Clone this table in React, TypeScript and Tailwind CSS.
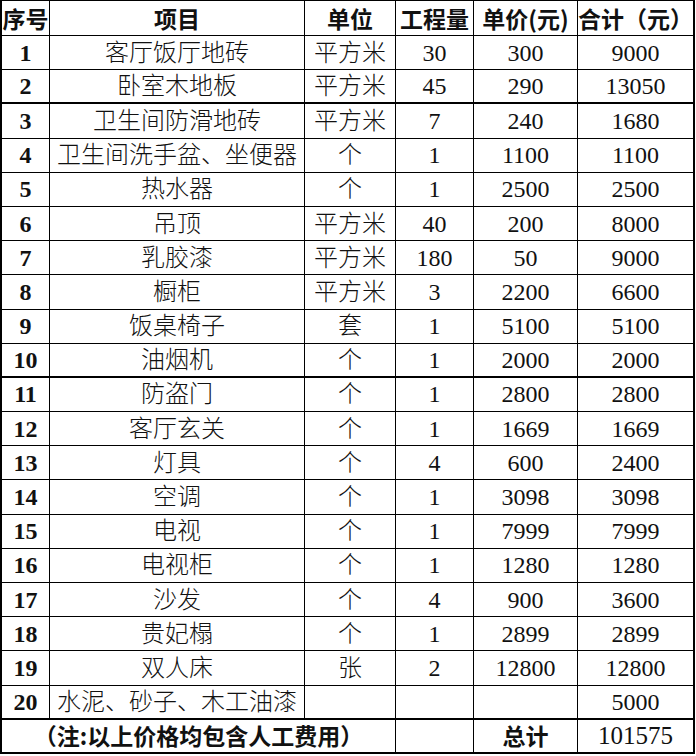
import React from "react";

type Row = [string, string, string, string, string, string];

const rows: Row[] = [
  ["1", "客厅饭厅地砖", "平方米", "30", "300", "9000"],
  ["2", "卧室木地板", "平方米", "45", "290", "13050"],
  ["3", "卫生间防滑地砖", "平方米", "7", "240", "1680"],
  ["4", "卫生间洗手盆、坐便器", "个", "1", "1100", "1100"],
  ["5", "热水器", "个", "1", "2500", "2500"],
  ["6", "吊顶", "平方米", "40", "200", "8000"],
  ["7", "乳胶漆", "平方米", "180", "50", "9000"],
  ["8", "橱柜", "平方米", "3", "2200", "6600"],
  ["9", "饭桌椅子", "套", "1", "5100", "5100"],
  ["10", "油烟机", "个", "1", "2000", "2000"],
  ["11", "防盗门", "个", "1", "2800", "2800"],
  ["12", "客厅玄关", "个", "1", "1669", "1669"],
  ["13", "灯具", "个", "4", "600", "2400"],
  ["14", "空调", "个", "1", "3098", "3098"],
  ["15", "电视", "个", "1", "7999", "7999"],
  ["16", "电视柜", "个", "1", "1280", "1280"],
  ["17", "沙发", "个", "4", "900", "3600"],
  ["18", "贵妃榻", "个", "1", "2899", "2899"],
  ["19", "双人床", "张", "2", "12800", "12800"],
  ["20", "水泥、砂子、木工油漆", "", "", "", "5000"],
];

const thickAfter = new Set(["2", "10", "20"]);

const base =
  "flex items-center justify-center border-r border-black overflow-hidden whitespace-nowrap leading-none";

const sans = "font-['Noto_Sans_CJK_SC']";
const cjk = "font-['Liberation_Serif','Noto_Sans_CJK_SC',serif]";
const num = "font-['Times_New_Roman']";

export default function App() {
  return (
    <div className="w-[696px] h-[756px] bg-white text-[#111]">
      <div className="w-[695px] border-l-2 border-t border-black grid grid-cols-[48px_255px_91px_78px_104px_117px] grid-rows-[35px_repeat(20,34.2px)_34px]">
        {["序号", "项目", "单位", "工程量", "单价(元)", "合计（元）"].map((h, i) => (
          <div
            key={h}
            className={`${base} border-b ${sans} font-bold text-[23px] ${
              i === 5 ? "border-r-2 justify-start" : ""
            }`}
          >
            {h}
          </div>
        ))}
        {rows.map((r) => {
          const b = thickAfter.has(r[0]) ? "border-b-2" : "border-b";
          return (
            <React.Fragment key={r[0]}>
              <div className={`${base} ${b} ${num} font-bold text-[24px]`}>{r[0]}</div>
              <div className={`${base} ${b} ${cjk} font-light text-[24px]`}>{r[1]}</div>
              <div className={`${base} ${b} ${cjk} font-light text-[24px]`}>{r[2]}</div>
              <div className={`${base} ${b} ${num} text-[24px]`}>{r[3]}</div>
              <div className={`${base} ${b} ${num} text-[24px]`}>{r[4]}</div>
              <div className={`${base} ${b} ${num} border-r-2 text-[24px]`}>{r[5]}</div>
            </React.Fragment>
          );
        })}
        <div className={`${base} col-span-3 border-b-2 ${sans} font-bold text-[23px]`}>
          （注:以上价格均包含人工费用）
        </div>
        <div className={`${base} border-b-2`}></div>
        <div className={`${base} border-b-2 ${sans} font-bold text-[23px]`}>总计</div>
        <div className={`${base} border-b-2 border-r-2 ${num} text-[25px]`}>101575</div>
      </div>
    </div>
  );
}
